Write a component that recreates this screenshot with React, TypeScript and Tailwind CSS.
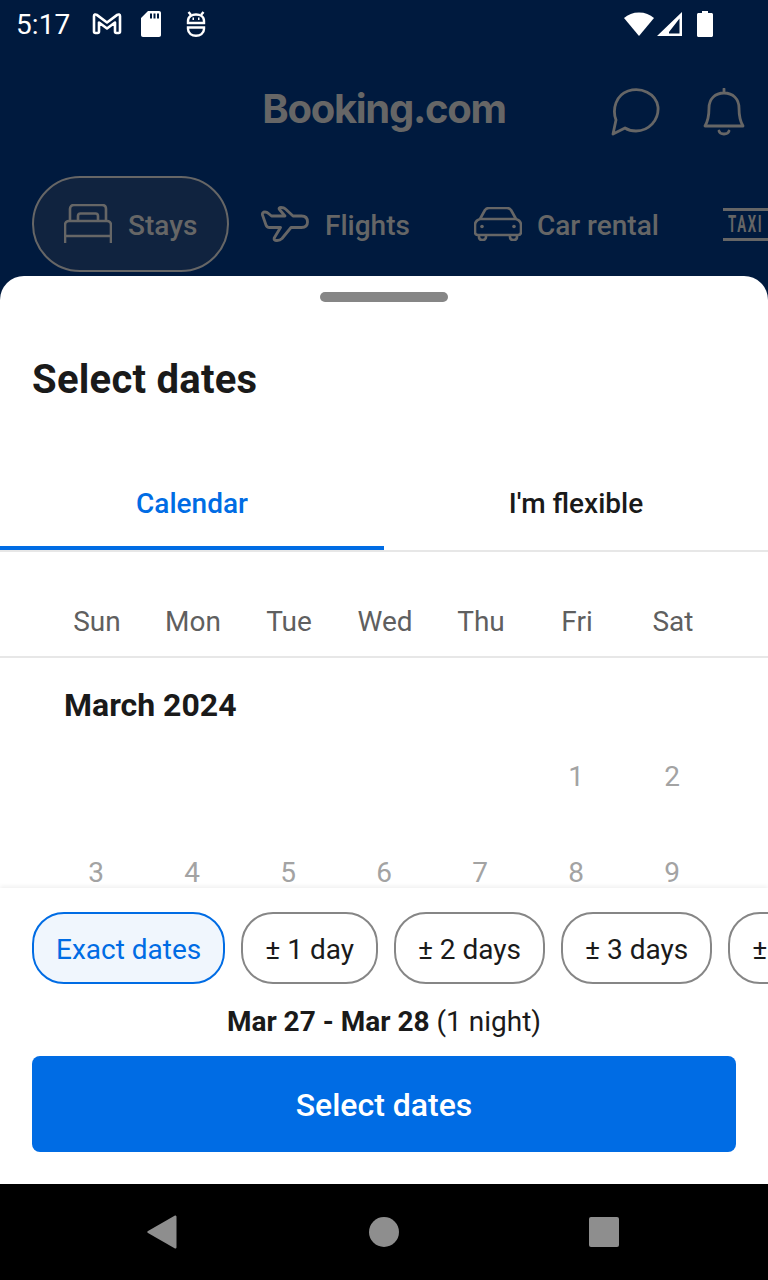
import React from 'react'

const dim = '#666666'
const days = ['Sun', 'Mon', 'Tue', 'Wed', 'Thu', 'Fri', 'Sat']
const row1 = ['', '', '', '', '', '1', '2']
const row2 = ['3', '4', '5', '6', '7', '8', '9']

function StatusBar() {
  return (
    <div className="flex h-12 items-center pl-[16px] pr-[53px] text-white">
      <span className="mt-0.5 text-[28px] leading-none tracking-[0.1px]">5:17</span>
      <svg width="30" height="24" viewBox="0 0 30 24" className="ml-[22px]" fill="none" stroke="white" strokeWidth="2.6" strokeLinejoin="round">
        <path d="M2 4 C2 2.500 3.500 2 4.800 2.900 L15 10.500 L25.200 2.900 C26.500 2 28 2.500 28 4 V19.500 C28 20.500 27.500 21 26.600 21 H24.500 C23.500 21 23 20.500 23 19.500 V10.500 L15 16.500 L7 10.500 V19.500 C7 20.500 6.500 21 5.500 21 H3.500 C2.500 21 2 20.500 2 19.500 Z" />
      </svg>
      <svg width="22" height="26" viewBox="0 0 22 26" className="ml-[18px]">
        <path fillRule="evenodd" fill="white" d="M8 0 H19 C20.200 0 21 0.800 21 2 V24 C21 25.200 20.200 26 19 26 H3 C1.800 26 1 25.200 1 24 V7 Z M10 2.500 H12 V7.500 H10 Z M13.500 2.500 H15.500 V7.500 H13.500 Z M17 2.500 H19 V7.500 H17 Z" />
      </svg>
      <svg width="20" height="26" viewBox="0 0 20 26" className="ml-[24px]" fill="none" stroke="white" strokeWidth="2.400">
        <path d="M2.500 1 L5 4 M17.500 1 L15 4" />
        <path d="M2 12 V10 C2 5.500 6 3.500 10 3.500 C14 3.500 18 5.500 18 10 V12 Z M1 12 H19" />
        <path d="M2 16.500 H18 V18 C18 22.500 14 24.800 10 24.800 C6 24.800 2 22.500 2 18 Z" />
        <path d="M6.500 7.800 H8 M12 7.800 H13.500" />
      </svg>
      <div className="ml-auto flex -translate-x-0.5 items-center">
        <svg width="30" height="24" viewBox="0 0 30 24">
          <path fill="white" d="M0 6 C4 2.500 9 0.500 15 0.500 C21 0.500 26 2.500 30 6 L15 24 Z" />
        </svg>
        <svg width="26" height="25" viewBox="0 0 26 25" className="ml-[3px]">
          <path fillRule="evenodd" fill="white" d="M25 0 V24 H0 Z M22.500 6.500 L12 20 V21.500 H22.500 Z" />
        </svg>
        <svg width="16" height="26" viewBox="0 0 16 26" className="ml-[14px]">
          <path fill="white" d="M5 0 H11 V2 H14.500 C15.300 2 16 2.700 16 3.500 V24.500 C16 25.300 15.300 26 14.500 26 H1.500 C0.700 26 0 25.300 0 24.500 V3.500 C0 2.700 0.700 2 1.500 2 H5 Z" />
        </svg>
      </div>
    </div>
  )
}

function BedIcon() {
  return (
    <svg width="48" height="40" viewBox="0 0 48 40" fill="none" stroke={dim} strokeWidth="2.600" strokeLinejoin="round">
      <path d="M1 39 V21 C1 18.500 3 17 5 17 H43 C45 17 47 18.500 47 21 V39 M1 32 H47" />
      <path d="M6 17 V5 C6 2.500 7.500 1 10 1 H38 C40.500 1 42 2.500 42 5 V17" />
      <path d="M14 17 V12 C14 10.500 15 9.500 16.500 9.500 H31.500 C33 9.500 34 10.500 34 12 V17" />
    </svg>
  )
}

function PlaneIcon() {
  return (
    <svg width="48" height="36" viewBox="0 0 48 36" fill="none" stroke={dim} strokeWidth="2.800" strokeLinejoin="round">
      <path d="M1.500 9 C1 7.500 2 6 4 6 C5.500 6 6.500 6.500 7.500 7.500 L10.500 10 H24 L18.500 3.500 C17.500 2 18.500 1.500 20 1.500 C22 1.500 23.500 2 24.500 3 L32 10 H40.500 C44.500 10 46.500 12.500 46.500 16 C46.500 19.500 44.500 21.500 40.500 21.500 H30 L21 32.500 C19.500 34 18 34.500 16 34.500 C13.500 34.500 12.500 33.500 13.500 31.500 L19.500 21.500 H8.500 C6.500 21.500 5.500 20.500 5 19 Z" />
    </svg>
  )
}

function CarIcon() {
  return (
    <svg width="48" height="34" viewBox="0 0 48 34" fill="none" stroke={dim} strokeWidth="2.600" strokeLinejoin="round">
      <path d="M6 12 L11 3 C12 1.800 13 1 15 1 H33 C35 1 36 1.800 37 3 L42 12 C45 13 47 15 47 18 V25 C47 27 46 28 44 28 H4 C2 28 1 27 1 25 V18 C1 15 3 13 6 12 Z M6 12 H42" />
      <path d="M5 28 V30 C5 32 6.500 33 8.500 33 C10.500 33 12 32 12 30 V28 M36 28 V30 C36 32 37.500 33 39.500 33 C41.500 33 43 32 43 30 V28" />
      <circle cx="8" cy="19.500" r="1.800" fill={dim} stroke="none" />
      <circle cx="40" cy="19.500" r="1.800" fill={dim} stroke="none" />
    </svg>
  )
}

function Backdrop() {
  return (
    <div className="h-[276px] shrink-0">
      <StatusBar />
      <div className="relative flex h-[128px] items-center justify-center">
        <span className="-mt-[6px] font-['Inter',sans-serif] text-[40px] font-bold leading-none tracking-[-1.3px]" style={{ color: dim }}>Booking.com</span>
        <svg width="50" height="50" viewBox="0 0 50 50" className="absolute left-[611px] top-[39px]" fill="none" stroke={dim} strokeWidth="2.800" strokeLinejoin="round">
          <path d="M5 33 C1 22 5 8 17 4 C30 0 45 6 47 20 C48 33 38 44 25 44 C21 44 17 43 14 41 L2 47 Z" />
        </svg>
        <svg width="42" height="50" viewBox="0 0 42 50" className="absolute left-[703px] top-[40px]" fill="none" stroke={dim} strokeWidth="2.800" strokeLinejoin="round" strokeLinecap="round">
          <path d="M21 1 V5 M2 38 C5 33 6 28 6 20 C6 11 12 5 21 5 C30 5 36 11 36 20 C36 28 37 33 40 38 Z M16 43 C17 47 25 47 26 43" />
        </svg>
      </div>
      <div className="flex items-center overflow-hidden pl-8 text-[28px] font-medium leading-none font-['Roboto',sans-serif]" style={{ color: dim }}>
        <div className="flex h-[96px] w-[197px] shrink-0 items-center gap-4 rounded-full border-2 border-[#666666] bg-[#10233f] pl-[30px]">
          <BedIcon />
          <span className="mt-1">Stays</span>
        </div>
        <div className="ml-8 flex shrink-0 items-center gap-4">
          <PlaneIcon />
          <span className="mt-1">Flights</span>
        </div>
        <div className="ml-16 flex shrink-0 items-center gap-4">
          <CarIcon />
          <span className="mt-1 -ml-px">Car rental</span>
        </div>
        <div className="ml-[64px] flex h-[33px] w-16 shrink-0 items-center overflow-hidden border-y-[3px] border-[#666666] pl-[5px] text-[24px] font-bold">
          <span className="origin-left scale-x-[0.55] tracking-[3px]">TAXI</span>
        </div>
      </div>
    </div>
  )
}

function Chip({ children, active }: { children: React.ReactNode; active?: boolean }) {
  return (
    <div className={active
      ? 'flex h-[72px] shrink-0 items-center rounded-[32px] border-2 border-[#006ce4] bg-[#f0f6fd] px-[22px] pt-1 text-[#006ce4]'
      : 'flex h-[72px] shrink-0 items-center rounded-[32px] border-2 border-[#868686] px-[22px] pt-1 text-[#1a1a1a]'}>
      {children}
    </div>
  )
}

export default function App() {
  return (
    <div className="flex h-[1280px] w-[768px] flex-col overflow-hidden bg-[#001a3e] font-['Roboto',sans-serif]">
      <Backdrop />

      <div className="relative flex min-h-0 flex-1 flex-col overflow-hidden rounded-t-3xl bg-white">
        <div className="mx-auto mt-4 h-2.5 w-32 shrink-0 rounded-full bg-[#868686]" />
        <h1 className="mt-[54px] pl-8 text-[40px] font-bold leading-[48px] tracking-[0.25px] text-[#1a1a1a]">Select dates</h1>

        <div className="mt-[72px] flex h-[76px] shrink-0 border-b-2 border-[#e7e7e7] text-[28px] font-medium">
          <div className="flex w-1/2 items-center justify-center border-b-4 border-[#006ce4] pb-3.5 text-[#006ce4]">Calendar</div>
          <div className="flex w-1/2 items-center justify-center pb-[18px] text-[#1a1a1a]">I'm flexible</div>
        </div>

        <div className="flex h-[106px] shrink-0 items-center border-b-2 border-[#e7e7e7] pl-[49px] pr-[47px] pt-[36px] text-[28px] text-[#5f5f5f]">
          {days.map(d => <div key={d} className="w-24 text-center">{d}</div>)}
        </div>

        <div className="px-12">
          <div className="mt-[27px] pl-4 text-[32px] font-bold leading-10 text-[#1a1a1a]">March 2024</div>
          <div className="mt-8 grid grid-cols-7 text-[28px] leading-10 text-[#a3a3a3]">
            {row1.concat(row2).map((n, i) => (
              <div key={i} className="flex h-24 justify-center">{n}</div>
            ))}
          </div>
        </div>

        <div className="absolute inset-x-0 bottom-0 h-[296px] bg-white pt-6 shadow-[0_-2px_4px_rgba(0,0,0,0.06)]">
          <div className="flex gap-4 overflow-hidden pl-8 text-[28px] leading-none">
            <Chip active>Exact dates</Chip>
            <Chip>± 1 day</Chip>
            <Chip>± 2 days</Chip>
            <Chip>± 3 days</Chip>
            <Chip>± 4 days</Chip>
          </div>
          <div className="mt-[18px] text-center text-[28px] leading-10 text-[#1a1a1a]">
            <span className="font-bold">Mar 27 - Mar 28</span> (1 night)
          </div>
          <div className="mx-8 mt-[14px] flex h-24 items-center justify-center rounded-lg bg-[#006ce4] pt-0.5 text-[32px] font-medium text-white">Select dates</div>
        </div>
      </div>

      <div className="flex h-24 shrink-0 items-center justify-center bg-black">
        <svg width="30" height="34" viewBox="0 0 30 34" className="ml-[-2px] mr-[192px]">
          <path fill="#8e8e8e" d="M28 0.500 C29 0.500 29.500 1 29.500 2 V32 C29.500 33 29 33.500 28 33.500 L1 18 C0 17.400 0 16.600 1 16 Z" />
        </svg>
        <div className="h-[30px] w-[30px] rounded-full bg-[#8e8e8e]" />
        <div className="ml-[190px] h-[30px] w-[30px] rounded-[2px] bg-[#8e8e8e]" />
      </div>
    </div>
  )
}
